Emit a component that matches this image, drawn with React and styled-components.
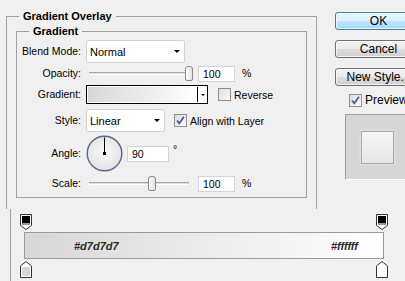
import React from "react";
import styled, { createGlobalStyle } from "styled-components";

const GlobalStyle = createGlobalStyle`
  html, body {
    margin: 0;
    padding: 0;
    background: #f0f0f0;
  }
  body {
    font-family: "Liberation Sans", Arial, sans-serif;
    font-size: 10.5px;
    color: #000;
  }
`;

const Page = styled.div`
  width: 405px;
  height: 281px;
  overflow: hidden;
  display: flex;
  flex-direction: column;
  background: #f0f0f0;
`;

const TopRow = styled.div`
  display: flex;
  height: 209px;
  box-sizing: border-box;
  flex-shrink: 0;
  padding: 10px 0 0 6px;
  gap: 18px;
`;

const Group = styled.fieldset`
  margin: 0;
  min-width: 0;
  flex-shrink: 0;
  box-sizing: border-box;
  width: ${(p) => p.$w}px;
  border: 1px solid #a0a0a0;
  border-bottom: ${(p) => (p.$open ? "none" : "1px solid #a0a0a0")};
  padding: ${(p) => p.$pad};
`;

const Legend = styled.legend`
  font-weight: bold;
  font-size: 11px;
  line-height: 12px;
  padding: 0 4px;
  margin-left: ${(p) => p.$indent}px;
`;

const Row = styled.div`
  display: flex;
  align-items: center;
  height: ${(p) => p.$h}px;
  margin-top: ${(p) => p.$mt}px;
  white-space: nowrap;
`;

const Label = styled.span`
  width: 64px;
  flex-shrink: 0;
  margin-right: 5px;
  margin-bottom: 2px;
  text-align: right;
  white-space: nowrap;
`;

const Select = styled.div`
  width: ${(p) => p.$w}px;
  height: 23px;
  box-sizing: border-box;
  border: 1px solid #d2d2d2;
  border-radius: 2px;
  background: #fff;
  display: flex;
  align-items: center;
  justify-content: space-between;
  padding: 0 4px 0 3px;
  font-size: 11px;
`;

const Arrow = styled.span`
  width: 0;
  height: 0;
  border-left: ${(p) => p.$s}px solid transparent;
  border-right: ${(p) => p.$s}px solid transparent;
  border-top: ${(p) => p.$s - 0.5}px solid #000;
`;

const Slider = styled.div`
  position: relative;
  flex-shrink: 0;
  width: 108px;
  height: 16px;
  margin-right: 4px;
`;

const Track = styled.div`
  position: absolute;
  left: 3px;
  right: 5px;
  top: 6px;
  height: 3px;
  box-sizing: border-box;
  border-top: 1px solid #a7a7a7;
  border-bottom: 1px solid #fff;
  background: #dcdcdc;
`;

const Thumb = styled.div`
  position: absolute;
  top: 0;
  width: 8px;
  height: 15px;
  box-sizing: border-box;
  border: 1px solid #8a8a8a;
  border-radius: 3px 3px 2px 2px;
  background: linear-gradient(to right, #fdfdfd, #e2e2e2);
`;

const Field = styled.div`
  width: ${(p) => p.$w}px;
  height: 16px;
  flex-shrink: 0;
  box-sizing: border-box;
  border: 1px solid #d4d4d4;
  background: #fff;
  display: flex;
  align-items: center;
  padding-left: 4px;
  margin-left: ${(p) => p.$gap || 0}px;
`;

const Unit = styled.span`
  margin-left: ${(p) => p.$gap}px;
  align-self: ${(p) => (p.$top ? "flex-start" : "center")};
  margin-top: ${(p) => (p.$top ? "8px" : "0")};
  margin-bottom: ${(p) => (p.$top ? "0" : "3px")};
`;

const GradientPicker = styled.div`
  display: flex;
  flex-shrink: 0;
  width: 122px;
  height: 19px;
  box-sizing: border-box;
  border: 1px solid #000;
  background: #fff;
`;

const Swatch = styled.div`
  flex: 1;
  margin: 1px;
  background: linear-gradient(to right, ${(p) => p.$from}, ${(p) => p.$to});
  border-right: 1px solid #fff;
  box-shadow: 1px 0 0 #000;
`;

const DropPart = styled.div`
  width: 9px;
  display: flex;
  align-items: center;
  justify-content: center;
  padding-top: 1px;
`;

const Check = styled.span`
  width: 13px;
  height: 13px;
  box-sizing: border-box;
  border: 1px solid #8e8f8f;
  background: linear-gradient(135deg, #dcdcdc, #fbfbfb);
  display: inline-flex;
  align-items: center;
  justify-content: center;
  flex-shrink: 0;
  margin-left: ${(p) => p.$gap}px;
  margin-right: 3px;
`;

const RightCol = styled.div`
  display: flex;
  flex-direction: column;
  flex-shrink: 0;
  margin-top: 2px;
`;

const ButtonStack = styled.div`
  display: flex;
  flex-direction: column;
  gap: 10px;
`;

const Button = styled.div`
  width: 87px;
  height: 18px;
  box-sizing: border-box;
  border: 1px solid ${(p) => (p.$primary ? "#3c7fb1" : "#707070")};
  border-radius: 3px;
  background: ${(p) =>
    p.$primary
      ? "linear-gradient(#eaf6fd, #d9f0fc 50%, #bee6fd 51%, #a7d9f5)"
      : "linear-gradient(#f2f2f2, #ebebeb 50%, #dddddd 51%, #cfcfcf)"};
  box-shadow: inset 0 0 0 1px rgba(255, 255, 255, 0.7);
  font-size: 12px;
  line-height: 16px;
  text-align: center;
  white-space: nowrap;
`;

const PreviewRow = styled.div`
  display: flex;
  align-items: center;
  height: 14px;
  margin-top: 7px;
  font-size: 12px;
  white-space: nowrap;
`;

const PreviewBox = styled.div`
  width: 80px;
  height: 66px;
  margin-top: 7px;
  margin-left: 10px;
  box-sizing: border-box;
  border-top: 1px solid #a0a0a0;
  border-left: 1px solid #a0a0a0;
  border-bottom: 1px solid #fff;
  background: #d6d6d6;
  padding: 16px 0 0 15px;
`;

const PreviewSquare = styled.div`
  width: 33px;
  height: 33px;
  box-sizing: border-box;
  border: 1px solid #a8a8a8;
  background: linear-gradient(#f6f6f6, #e6e6e6);
  box-shadow: 0 0 2px 1px #e4e4e4;
`;

const Editor = styled.div`
  flex: 1;
  margin-left: 10px;
  border-left: 1px solid #a0a0a0;
  padding-top: 5px;
`;

const StopRow = styled.div`
  display: flex;
  justify-content: space-between;
  width: 368px;
  padding-left: 9px;
`;

const Ramp = styled.div`
  width: 360px;
  height: 27px;
  margin: 2px 0 2px 13px;
  box-sizing: border-box;
  border: 1px solid #9a9a9a;
  background: linear-gradient(to right, #d7d7d7, #ffffff);
  display: flex;
  align-items: center;
  justify-content: space-between;
  padding: 0 25px 0 49px;
  font-weight: bold;
  font-style: italic;
  font-size: 11px;
  color: #2a2a2a;
`;

function CheckMark() {
  return (
    <svg width="11" height="11" viewBox="0 0 11 11">
      <path d="M2 5.5 L4.3 8.3 L9 1.8" fill="none" stroke="#4b5d96" strokeWidth="1.8" />
    </svg>
  );
}

function Checkbox({ checked, gap }) {
  return <Check $gap={gap}>{checked && <CheckMark />}</Check>;
}

function RangeSlider({ pct }) {
  return (
    <Slider>
      <Track />
      <Thumb style={{ left: `${Math.round(pct * 100) - 1}px` }} />
    </Slider>
  );
}

function AngleDial({ deg }) {
  const r = 16;
  const a = (deg * Math.PI) / 180;
  const x2 = 18.5 + Math.cos(a) * r;
  const y2 = 18.5 - Math.sin(a) * r;
  return (
    <svg width="37" height="37" viewBox="0 0 37 37" style={{ flexShrink: 0 }}>
      <defs>
        <radialGradient id="dialFill" cx="50%" cy="45%" r="55%">
          <stop offset="0%" stopColor="#fafafa" />
          <stop offset="100%" stopColor="#e2e2e2" />
        </radialGradient>
      </defs>
      <circle cx="18.5" cy="18.5" r="17.3" fill="url(#dialFill)" stroke="#56688f" strokeWidth="1.4" />
      <line x1="18.5" y1="18.5" x2={x2} y2={y2} stroke="#000" strokeWidth="1" />
      <rect x="17" y="17" width="3" height="3" fill="#000" />
    </svg>
  );
}

function OpacityStop() {
  return (
    <svg width="12" height="16" viewBox="0 0 12 16">
      <path d="M0.5 0.5 H11.5 V11.5 L6 15.5 L0.5 11.5 Z" fill="#fff" stroke="#333" />
      <rect x="2" y="2" width="8" height="7" fill="#000" />
      <rect x="2" y="9" width="8" height="2" fill="#9a9a9a" />
    </svg>
  );
}

function ColorStop({ color }) {
  return (
    <svg width="12" height="17" viewBox="0 0 12 17">
      <path d="M6 0.5 L11.5 5 V16.5 H0.5 V5 Z" fill="#fff" stroke="#333" />
      <rect x="2" y="6" width="8" height="9" fill={color} />
    </svg>
  );
}

export default function App() {
  return (
    <>
      <GlobalStyle />
      <Page>
        <TopRow>
          <Group $w={311} $open $pad="3px 9px 0 9px">
            <Legend $indent={3}>Gradient Overlay</Legend>
            <Group $w={291} $pad="0 0 5px 0">
              <Legend $indent={12}>Gradient</Legend>

              <Row $h={23} $mt={3}>
                <Label>Blend Mode:</Label>
                <Select $w={99}>
                  Normal
                  <Arrow $s={3.5} />
                </Select>
              </Row>

              <Row $h={16} $mt={3}>
                <Label>Opacity:</Label>
                <RangeSlider pct={1} />
                <Field $w={37}>100</Field>
                <Unit $gap={7}>%</Unit>
              </Row>

              <Row $h={19} $mt={3}>
                <Label>Gradient:</Label>
                <GradientPicker>
                  <Swatch $from="#d7d7d7" $to="#ffffff" />
                  <DropPart>
                    <Arrow $s={2.5} />
                  </DropPart>
                </GradientPicker>
                <Checkbox gap={10} />
                Reverse
              </Row>

              <Row $h={23} $mt={5}>
                <Label>Style:</Label>
                <Select $w={79}>
                  Linear
                  <Arrow $s={3.5} />
                </Select>
                <Checkbox checked gap={9} />
                Align with Layer
              </Row>

              <Row $h={37} $mt={3}>
                <Label>Angle:</Label>
                <AngleDial deg={90} />
                <Field $w={42} $gap={4}>90</Field>
                <Unit $gap={4} $top>°</Unit>
              </Row>

              <Row $h={16} $mt={4}>
                <Label>Scale:</Label>
                <RangeSlider pct={0.625} />
                <Field $w={37}>100</Field>
                <Unit $gap={7}>%</Unit>
              </Row>
            </Group>
          </Group>

          <RightCol>
            <ButtonStack>
              <Button $primary>OK</Button>
              <Button>Cancel</Button>
              <Button>New Style...</Button>
            </ButtonStack>
            <PreviewRow>
              <Checkbox checked gap={14} />
              Preview
            </PreviewRow>
            <PreviewBox>
              <PreviewSquare />
            </PreviewBox>
          </RightCol>
        </TopRow>

        <Editor>
          <StopRow>
            <OpacityStop />
            <OpacityStop />
          </StopRow>
          <Ramp>
            <span>#d7d7d7</span>
            <span>#ffffff</span>
          </Ramp>
          <StopRow>
            <ColorStop color="#d7d7d7" />
            <ColorStop color="#ffffff" />
          </StopRow>
        </Editor>
      </Page>
    </>
  );
}
